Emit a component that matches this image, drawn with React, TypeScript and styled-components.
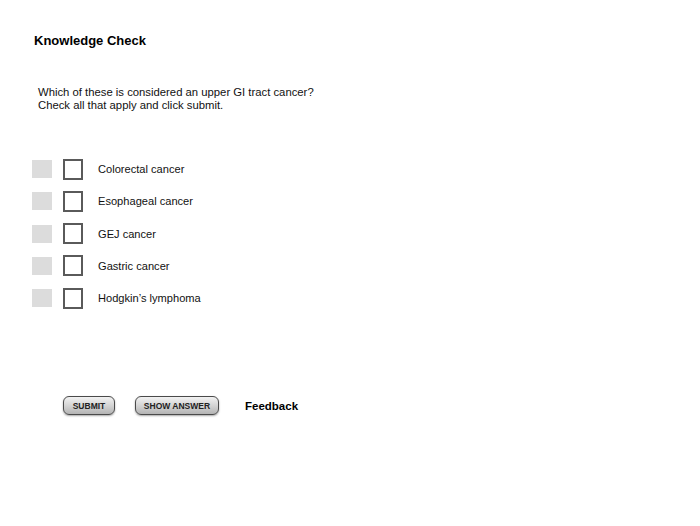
import { createGlobalStyle, styled } from "styled-components";

const GlobalStyle = createGlobalStyle`
  body {
    margin: 0;
    background: #ffffff;
    font-family: "Liberation Sans", Arial, sans-serif;
    color: #111111;
  }
`;

const Page = styled.div`
  width: 700px;
  height: 526px;
  box-sizing: border-box;
  padding: 33px 0 0 34px;
`;

const Title = styled.h1`
  margin: 0;
  font-size: 13px;
  line-height: 15px;
  font-weight: 700;
  color: #000;
`;

const Question = styled.p`
  margin: 38px 0 0 4px;
  font-size: 11.3px;
  line-height: 13px;
  color: #111;
`;

const Options = styled.div`
  margin-top: 41px;
  margin-left: -2px;
  display: flex;
  flex-direction: column;
`;

const Row = styled.div`
  height: 32.25px;
  display: flex;
  align-items: center;
`;

const Marker = styled.div`
  width: 20px;
  height: 18px;
  background: #dcdcdc;
`;

const Box = styled.div`
  width: 20px;
  height: 21px;
  box-sizing: border-box;
  margin-left: 11px;
  border: 2px solid #5a5a5a;
  background: #fff;
`;

const Label = styled.span`
  margin-left: 15px;
  font-size: 11.1px;
  color: #111;
`;

const Actions = styled.div`
  margin-top: 82px;
  margin-left: 29px;
  display: flex;
  align-items: center;
`;

const Button = styled.button<{ $width: number }>`
  width: ${(p) => p.$width}px;
  height: 19px;
  margin-right: 20px;
  padding: 0;
  border: 1px solid #4a4a4a;
  border-radius: 6px;
  background: linear-gradient(#f2f2f2, #d4d4d4 50%, #b4b4b4);
  box-shadow: 0 1px 2px rgba(0, 0, 0, 0.35);
  font-family: "Liberation Sans", Arial, sans-serif;
  font-size: 8.5px;
  font-weight: 700;
  color: #222;
  cursor: pointer;
`;

const Feedback = styled.span`
  margin-left: 6px;
  font-size: 11.5px;
  font-weight: 700;
  color: #000;
`;

const options = [
  "Colorectal cancer",
  "Esophageal cancer",
  "GEJ cancer",
  "Gastric cancer",
  "Hodgkin\u2019s lymphoma",
];

export default function App() {
  return (
    <>
      <GlobalStyle />
      <Page>
        <Title>Knowledge Check</Title>
        <Question>
          Which of these is considered an upper GI tract cancer?
          <br />
          Check all that apply and click submit.
        </Question>
        <Options>
          {options.map((o) => (
            <Row key={o}>
              <Marker />
              <Box />
              <Label>{o}</Label>
            </Row>
          ))}
        </Options>
        <Actions>
          <Button $width={52}>SUBMIT</Button>
          <Button $width={84}>SHOW ANSWER</Button>
          <Feedback>Feedback</Feedback>
        </Actions>
      </Page>
    </>
  );
}
